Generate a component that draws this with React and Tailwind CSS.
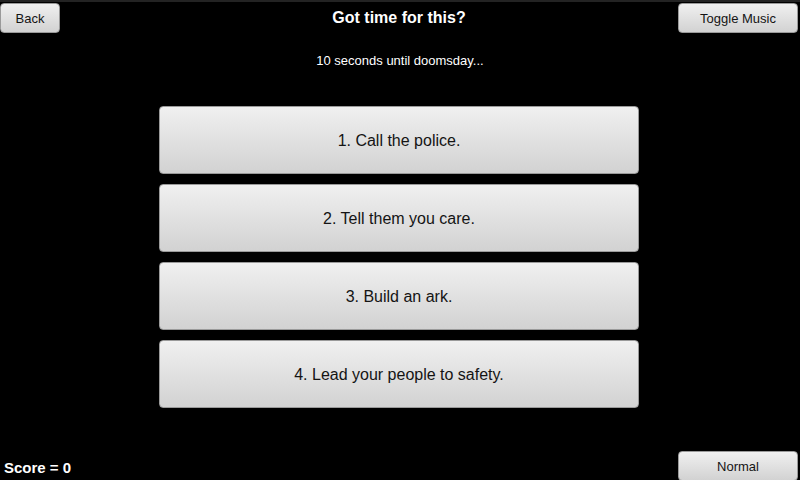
export default function App() {
  const answers = [
    "1. Call the police.",
    "2. Tell them you care.",
    "3. Build an ark.",
    "4. Lead your people to safety.",
  ];
  const btn =
    "bg-gradient-to-b from-[#f0f0f0] to-[#d2d2d2] border border-[#9a9a9a] rounded-[4px] text-[#141414] flex items-center justify-center pt-[2px]";
  return (
    <div
      className="w-[800px] h-[480px] bg-black overflow-hidden flex flex-col"
      style={{ fontFamily: '"Liberation Sans", Arial, sans-serif' }}
    >
      <div className="h-[2px] bg-[#232323] shrink-0" />
      <div className="flex items-start pt-[1px] pr-[2px] h-[31px] shrink-0">
        <div className="flex-1 flex">
          <button className={btn + " w-[60px] h-[30px] text-[13px]"}>Back</button>
        </div>
        <div className="text-center text-white font-bold text-[16px] leading-[30px]">
          Got time for this?
        </div>
        <div className="flex-1 flex justify-end">
          <button className={btn + " w-[120px] h-[30px] text-[13px]"}>Toggle Music</button>
        </div>
      </div>
      <div className="text-center text-white text-[13px] leading-[14px] mt-[21px] shrink-0">
        10 seconds until doomsday...
      </div>
      <div className="flex flex-col items-center gap-[10px] mt-[38px] pr-[2px]">
        {answers.map((a) => (
          <button key={a} className={btn + " w-[480px] h-[68px] text-[16px]"}>
            {a}
          </button>
        ))}
      </div>
      <div className="mt-auto flex items-end justify-between pr-[2px] h-[30px]">
        <div className="text-white font-bold text-[15px] leading-[16px] pl-[4px] pb-[4px]">
          Score = 0
        </div>
        <button className={btn + " w-[120px] h-[30px] text-[13px] mb-[-1px]"}>Normal</button>
      </div>
    </div>
  );
}
